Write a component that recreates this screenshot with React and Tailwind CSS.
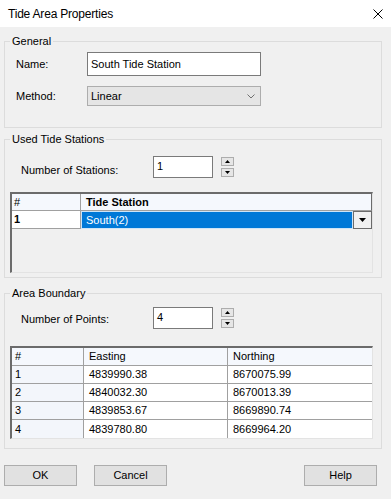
const Spin = ({ value }) => (
  <div className="flex items-start">
    <div className="w-[60px] h-[22px] bg-white border border-[#7a7a7a] pl-[3px] pt-[2px] leading-[14px] text-[11px]">{value}</div>
    <div className="ml-[8px] mt-[1px] flex flex-col gap-[2px]">
      <div className="w-[13px] h-[9px] bg-[#e6e6e6] border border-[#adadad] flex items-center justify-center">
        <svg width="5" height="3" viewBox="0 0 5 3"><path d="M2.5 0L5 3H0Z" fill="#000" /></svg>
      </div>
      <div className="w-[13px] h-[9px] bg-[#e6e6e6] border border-[#adadad] flex items-center justify-center">
        <svg width="5" height="3" viewBox="0 0 5 3"><path d="M0 0H5L2.5 3Z" fill="#000" /></svg>
      </div>
    </div>
  </div>
);

const rows = [
  ["1", "4839990.38", "8670075.99"],
  ["2", "4840032.30", "8670013.39"],
  ["3", "4839853.67", "8669890.74"],
  ["4", "4839780.80", "8669964.20"],
];

export default function App() {
  return (
    <div className="w-[391px] h-[499px] bg-[#f0f0f0] text-black font-['Liberation_Sans',Arial,sans-serif] text-[11px] overflow-hidden">
      <div className="h-[27px] bg-white flex items-center justify-between pl-[8px] pr-[8px]">
        <span className="text-[12px] tracking-[-0.2px]">Tide Area Properties</span>
        <svg width="10" height="10" viewBox="0 0 10 10">
          <path d="M0.5 0.5L9.5 9.5M9.5 0.5L0.5 9.5" stroke="#000" strokeWidth="1" />
        </svg>
      </div>

      <fieldset className="ml-[4px] w-[378px] mt-[7px] border border-[#dcdcdc] pb-[21px]">
        <legend className="ml-[5px] px-[2px] leading-[14px]">General</legend>
        <div className="pl-[11px]">
          <div className="mt-[4px] flex items-center">
            <div className="w-[71px]">Name:</div>
            <div className="w-[174px] h-[24px] bg-white border border-[#7a7a7a] px-[3px] flex items-center">South Tide Station</div>
          </div>
          <div className="mt-[10px] flex items-center">
            <div className="w-[71px]">Method:</div>
            <div className="w-[174px] h-[20px] bg-[#e5e5e5] border border-[#adadad] pl-[3px] pr-[5px] flex items-center justify-between">
              <span>Linear</span>
              <svg width="8" height="5" viewBox="0 0 8 5">
                <path d="M0.5 0.5L4 4L7.5 0.5" stroke="#707070" strokeWidth="1" fill="none" />
              </svg>
            </div>
          </div>
        </div>
      </fieldset>

      <fieldset className="ml-[4px] w-[378px] mt-[4px] border border-[#dcdcdc] pb-[4px]">
        <legend className="ml-[5px] px-[2px] leading-[14px]">Used Tide Stations</legend>
        <div className="mt-[10px] pl-[16px] flex items-end">
          <div className="w-[132px] leading-[13px] pb-[1px]">Number of Stations:</div>
          <Spin value="1" />
        </div>
        <div className="mt-[14px] ml-[5px] w-[363px] h-[81px] border-t-2 border-l-2 border-r border-b border-t-[#6b6b6b] border-l-[#6b6b6b] border-r-[#e3e3e3] border-b-[#e3e3e3] bg-[#f0f0f0]">
          <div className="h-[17px] flex bg-[#f5f8fd] border-b border-r border-b-[#a0a0a0] border-r-[#6b6b6b]">
            <div className="w-[69px] border-r border-[#a0a0a0] pl-[2px] flex items-center">#</div>
            <div className="flex-1 pl-[5px] flex items-center font-bold">Tide Station</div>
          </div>
          <div className="h-[18px] flex">
            <div className="w-[69px] bg-white border-r border-b border-[#a0a0a0] pl-[2px] flex items-center font-bold">1</div>
            <div className="flex-1 bg-[#0078d7] border border-[#cde4f7] text-white pl-[4px] flex items-center">South(2)</div>
            <div className="w-[19px] bg-[#f0f0f0] border border-[#6b6b6b] flex items-center justify-center">
              <svg width="7" height="4" viewBox="0 0 7 4"><path d="M0 0H7L3.5 4Z" fill="#000" /></svg>
            </div>
          </div>
        </div>
      </fieldset>

      <fieldset className="ml-[4px] w-[378px] mt-[8px] border border-[#dcdcdc] pb-[9px]">
        <legend className="ml-[5px] px-[2px] leading-[14px]">Area Boundary</legend>
        <div className="mt-[7px] pl-[16px] flex items-end">
          <div className="w-[132px] leading-[13px] pb-[3px]">Number of Points:</div>
          <Spin value="4" />
        </div>
        <div className="mt-[17px] ml-[5px] w-[363px] border-t-2 border-l-2 border-r border-b border-t-[#6b6b6b] border-l-[#6b6b6b] border-r-[#e3e3e3] border-b-[#e3e3e3] bg-white">
          <div className="h-[18px] flex bg-[#f5f8fd] border-b border-[#a0a0a0]">
            <div className="w-[72px] border-r border-[#a0a0a0] pl-[3px] flex items-center">#</div>
            <div className="w-[144px] border-r border-[#a0a0a0] pl-[5px] flex items-center">Easting</div>
            <div className="flex-1 pl-[5px] flex items-center">Northing</div>
          </div>
          {rows.map((r) => (
            <div key={r[0]} className="h-[18px] flex border-b border-[#a0a0a0] last:border-b-0">
              <div className="w-[72px] bg-[#f3f6fb] border-r border-[#a0a0a0] pl-[3px] flex items-center">{r[0]}</div>
              <div className="w-[144px] border-r border-[#a0a0a0] pl-[5px] flex items-center">{r[1]}</div>
              <div className="flex-1 pl-[5px] flex items-center">{r[2]}</div>
            </div>
          ))}
        </div>
      </fieldset>

      <div className="mt-[16px] px-[4px] flex">
        <button className="w-[73px] h-[21px] bg-[#e1e1e1] border border-[#adadad] flex items-center justify-center">OK</button>
        <button className="ml-[17px] w-[73px] h-[21px] bg-[#e1e1e1] border border-[#adadad] flex items-center justify-center">Cancel</button>
        <button className="ml-auto mr-[10px] w-[73px] h-[21px] bg-[#e1e1e1] border border-[#adadad] flex items-center justify-center">Help</button>
      </div>
    </div>
  );
}
